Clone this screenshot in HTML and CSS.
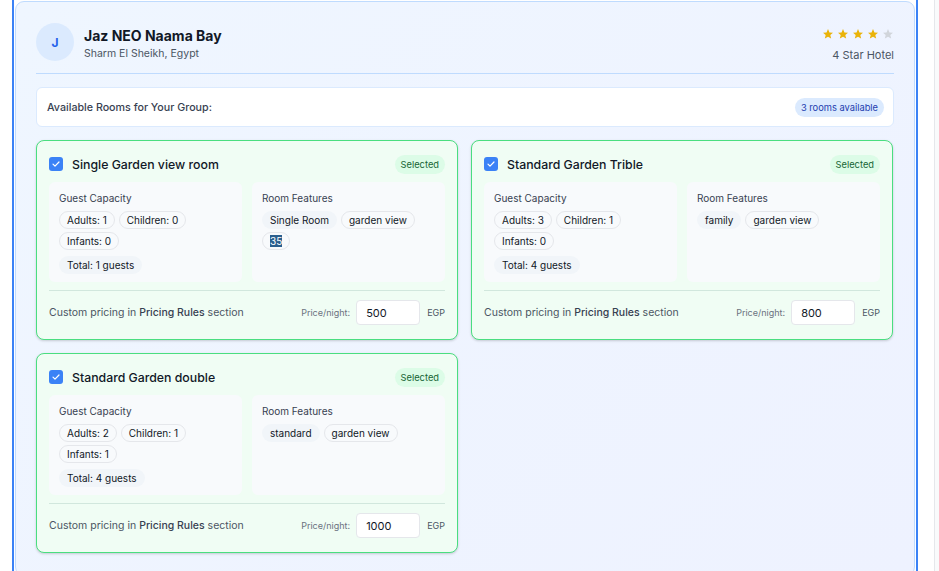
FILE: index.html
```html
<!DOCTYPE html>
<html lang="en">
<head>
<meta charset="utf-8">
<title>Hotel rooms</title>
<link rel="stylesheet" href="styles.css">
</head>
<body>
<div class="page">
  <div class="frame">
    <section class="hotel">
      <header class="hotel-head">
        <div class="hotel-id">
          <div class="avatar">J</div>
          <div class="hotel-text">
            <h1 class="hotel-name">Jaz NEO Naama Bay</h1>
            <p class="hotel-loc">Sharm El Sheikh, Egypt</p>
          </div>
        </div>
        <div class="hotel-rating">
          <div class="stars">
            <svg class="star on" viewBox="0 0 24 24"><path d="M12 2l2.9 6.9 7.1.6-5.4 4.7 1.7 7-6.3-3.9-6.3 3.9 1.7-7L2 9.5l7.1-.6z"/></svg>
            <svg class="star on" viewBox="0 0 24 24"><path d="M12 2l2.9 6.9 7.1.6-5.4 4.7 1.7 7-6.3-3.9-6.3 3.9 1.7-7L2 9.5l7.1-.6z"/></svg>
            <svg class="star on" viewBox="0 0 24 24"><path d="M12 2l2.9 6.9 7.1.6-5.4 4.7 1.7 7-6.3-3.9-6.3 3.9 1.7-7L2 9.5l7.1-.6z"/></svg>
            <svg class="star on" viewBox="0 0 24 24"><path d="M12 2l2.9 6.9 7.1.6-5.4 4.7 1.7 7-6.3-3.9-6.3 3.9 1.7-7L2 9.5l7.1-.6z"/></svg>
            <svg class="star off" viewBox="0 0 24 24"><path d="M12 2l2.9 6.9 7.1.6-5.4 4.7 1.7 7-6.3-3.9-6.3 3.9 1.7-7L2 9.5l7.1-.6z"/></svg>
          </div>
          <div class="rating-label">4 Star Hotel</div>
        </div>
      </header>

      <div class="avail">
        <span class="avail-title">Available Rooms for Your Group:</span>
        <span class="avail-badge">3 rooms available</span>
      </div>

      <div class="rooms">
        <article class="room">
          <div class="room-head">
            <div class="room-title-wrap">
              <span class="checkbox"><svg viewBox="0 0 14 14"><path d="M4 7.2l2 2 4-4.2" fill="none" stroke="#fff" stroke-width="1.2" stroke-linecap="round" stroke-linejoin="round"/></svg></span>
              <h2 class="room-title">Single Garden view room</h2>
            </div>
            <span class="selected">Selected</span>
          </div>
          <div class="room-body">
            <div class="panel">
              <div class="panel-label">Guest Capacity</div>
              <div class="tags">
                <span class="tag outline">Adults: 1</span>
                <span class="tag outline">Children: 0</span>
                <span class="tag outline">Infants: 0</span>
              </div>
              <div class="tags total-row"><span class="tag filled">Total: 1 guests</span></div>
            </div>
            <div class="panel">
              <div class="panel-label">Room Features</div>
              <div class="tags">
                <span class="tag filled">Single Room</span>
                <span class="tag outline">garden view</span>
                <span class="tag outline"><span class="hl">35</span></span>
              </div>
            </div>
          </div>
          <div class="room-foot">
            <span class="pricing-note">Custom pricing in <strong>Pricing Rules</strong> section</span>
            <div class="price">
              <span class="price-label">Price/night:</span>
              <input class="price-input" type="text" value="500">
              <span class="currency">EGP</span>
            </div>
          </div>
        </article>

        <article class="room">
          <div class="room-head">
            <div class="room-title-wrap">
              <span class="checkbox"><svg viewBox="0 0 14 14"><path d="M4 7.2l2 2 4-4.2" fill="none" stroke="#fff" stroke-width="1.2" stroke-linecap="round" stroke-linejoin="round"/></svg></span>
              <h2 class="room-title">Standard Garden Trible</h2>
            </div>
            <span class="selected">Selected</span>
          </div>
          <div class="room-body">
            <div class="panel">
              <div class="panel-label">Guest Capacity</div>
              <div class="tags">
                <span class="tag outline">Adults: 3</span>
                <span class="tag outline">Children: 1</span>
                <span class="tag outline">Infants: 0</span>
              </div>
              <div class="tags total-row"><span class="tag filled">Total: 4 guests</span></div>
            </div>
            <div class="panel">
              <div class="panel-label">Room Features</div>
              <div class="tags">
                <span class="tag filled">family</span>
                <span class="tag outline">garden view</span>
              </div>
            </div>
          </div>
          <div class="room-foot">
            <span class="pricing-note">Custom pricing in <strong>Pricing Rules</strong> section</span>
            <div class="price">
              <span class="price-label">Price/night:</span>
              <input class="price-input" type="text" value="800">
              <span class="currency">EGP</span>
            </div>
          </div>
        </article>

        <article class="room">
          <div class="room-head">
            <div class="room-title-wrap">
              <span class="checkbox"><svg viewBox="0 0 14 14"><path d="M4 7.2l2 2 4-4.2" fill="none" stroke="#fff" stroke-width="1.2" stroke-linecap="round" stroke-linejoin="round"/></svg></span>
              <h2 class="room-title">Standard Garden double</h2>
            </div>
            <span class="selected">Selected</span>
          </div>
          <div class="room-body">
            <div class="panel">
              <div class="panel-label">Guest Capacity</div>
              <div class="tags">
                <span class="tag outline">Adults: 2</span>
                <span class="tag outline">Children: 1</span>
                <span class="tag outline">Infants: 1</span>
              </div>
              <div class="tags total-row"><span class="tag filled">Total: 4 guests</span></div>
            </div>
            <div class="panel">
              <div class="panel-label">Room Features</div>
              <div class="tags">
                <span class="tag filled">standard</span>
                <span class="tag outline">garden view</span>
              </div>
            </div>
          </div>
          <div class="room-foot">
            <span class="pricing-note">Custom pricing in <strong>Pricing Rules</strong> section</span>
            <div class="price">
              <span class="price-label">Price/night:</span>
              <input class="price-input" type="text" value="1000">
              <span class="currency">EGP</span>
            </div>
          </div>
        </article>
      </div>
    </section>
  </div>
  <div class="gutter"></div>
  <div class="scrolltrack"></div>
</div>
</body>
</html>
```

FILE: styles.css
```css
* { box-sizing: border-box; }
html, body { margin: 0; padding: 0; height: 100%; overflow: hidden; }
body {
  font-family: Inter, "Noto Sans", Arial, sans-serif;
  color: #111827;
  background: #fff;
}
.page {
  display: flex;
  height: 571px;
  padding-left: 12px;
}
.frame {
  width: 906px;
  flex: none;
  border-left: 2px solid #3b82f6;
  border-right: 2px solid #3b82f6;
  padding: 1px 1px 0 1px;
}
.gutter { width: 16px; flex: none; }
.scrolltrack {
  flex: 1;
  border-left: 1px solid #e5e7eb;
  background: #f9fafb;
}
.hotel {
  width: 900px;
  min-height: 575px;
  border: 1px solid #bfdbfe;
  border-radius: 9px;
  background: linear-gradient(135deg, #eff6ff 0%, #eef2ff 100%);
  padding: 21px 20px 20px 20px;
}
.hotel-head {
  display: flex;
  justify-content: space-between;
  align-items: flex-start;
  padding-bottom: 11px;
  border-bottom: 1px solid #bfdbfe;
}
.hotel-id { display: flex; align-items: flex-start; gap: 10px; }
.avatar {
  width: 38px; height: 38px;
  border-radius: 50%;
  background: #dbeafe;
  color: #2563eb;
  font-weight: 700;
  font-size: 12px;
  display: flex; align-items: center; justify-content: center;
}
.hotel-text { padding-top: 3px; }
.hotel-name {
  margin: 0;
  font-size: 14px;
  font-weight: 700;
  line-height: 20px;
  color: #111827;
}
.hotel-loc {
  margin: 1px 0 0;
  font-size: 10.5px;
  line-height: 14px;
  color: #4b5563;
}
.hotel-rating {
  display: flex; flex-direction: column; align-items: flex-end;
  padding-top: 5px;
}
.stars { display: flex; gap: 3px; }
.star { width: 12px; height: 12px; }
.star.on { fill: #eab308; }
.star.off { fill: #d1d5db; }
.rating-label {
  margin-top: 8px;
  font-size: 11px;
  line-height: 14px;
  color: #4b5563;
}
.avail {
  margin-top: 13px;
  height: 40px;
  background: #fff;
  border: 1px solid #dbeafe;
  border-radius: 6px;
  display: flex; align-items: center; justify-content: space-between;
  padding: 0 9px 0 10px;
}
.avail-title { font-size: 10.7px; font-weight: 500; color: #374151; }
.avail-badge {
  background: #dbeafe;
  color: #1e40af;
  font-size: 9.3px;
  line-height: 19px;
  padding: 0 6px;
  border-radius: 10px;
}
.rooms {
  margin-top: 13px;
  display: grid;
  grid-template-columns: 422px 422px;
  gap: 13px;
}
.room {
  background: #f0fdf4;
  border: 1px solid #4ade80;
  border-radius: 8px;
  box-shadow: 0 1px 3px rgba(0,0,0,0.12), 0 1px 2px rgba(0,0,0,0.06);
  padding: 13px 12px 14px 12px;
}
.room-head {
  display: flex; justify-content: space-between; align-items: center;
  height: 20px;
}
.room-title-wrap { display: flex; align-items: center; gap: 9px; }
.checkbox {
  width: 14px; height: 14px;
  background: #3b82f6;
  border-radius: 3px;
  display: flex;
}
.checkbox svg { width: 14px; height: 14px; }
.room-title {
  margin: 0;
  font-size: 12.3px;
  font-weight: 500;
  color: #111827;
}
.selected {
  background: #dcfce7;
  color: #166534;
  font-size: 9.3px;
  line-height: 19px;
  padding: 0 6px;
  border-radius: 10px;
}
.room-body {
  margin-top: 8px;
  display: grid;
  grid-template-columns: 1fr 1fr;
  gap: 10px;
  padding-bottom: 8px;
  border-bottom: 1px solid #d1e7dd;
}
.panel {
  background: #f8fafc;
  border-radius: 6px;
  padding: 9px 10px 8px;
  min-height: 100px;
}
.panel-label {
  font-size: 10px;
  line-height: 14px;
  color: #374151;
  margin-bottom: 6px;
}
.tags { display: flex; flex-wrap: wrap; gap: 3px 4px; }
.total-row { margin-top: 6px; }
.tag {
  font-size: 10px;
  line-height: 16px;
  padding: 0 7px;
  border-radius: 9px;
  color: #111827;
  border: 1px solid transparent;
}
.tag.outline { border-color: #e5e7eb; background: #f8fafc; }
.tag.filled { background: #f1f5f9; }
.hl { background: #2b5f8e; color: #fff; }
.room-foot {
  margin-top: 9px;
  display: flex; justify-content: space-between; align-items: center;
}
.pricing-note { font-size: 10.5px; color: #4b5563; }
.pricing-note strong { font-weight: 500; color: #374151; }
.price { display: flex; align-items: center; }
.price-label { font-size: 9px; color: #6b7280; margin-right: 6px; }
.price-input {
  width: 64px; height: 25px;
  border: 1px solid #e5e7eb;
  border-radius: 4px;
  background: #fff;
  font-family: inherit;
  font-size: 11px;
  color: #111827;
  padding: 0 9px;
  outline: none;
}
.currency { font-size: 9px; color: #4b5563; margin-left: 7px; }
```
